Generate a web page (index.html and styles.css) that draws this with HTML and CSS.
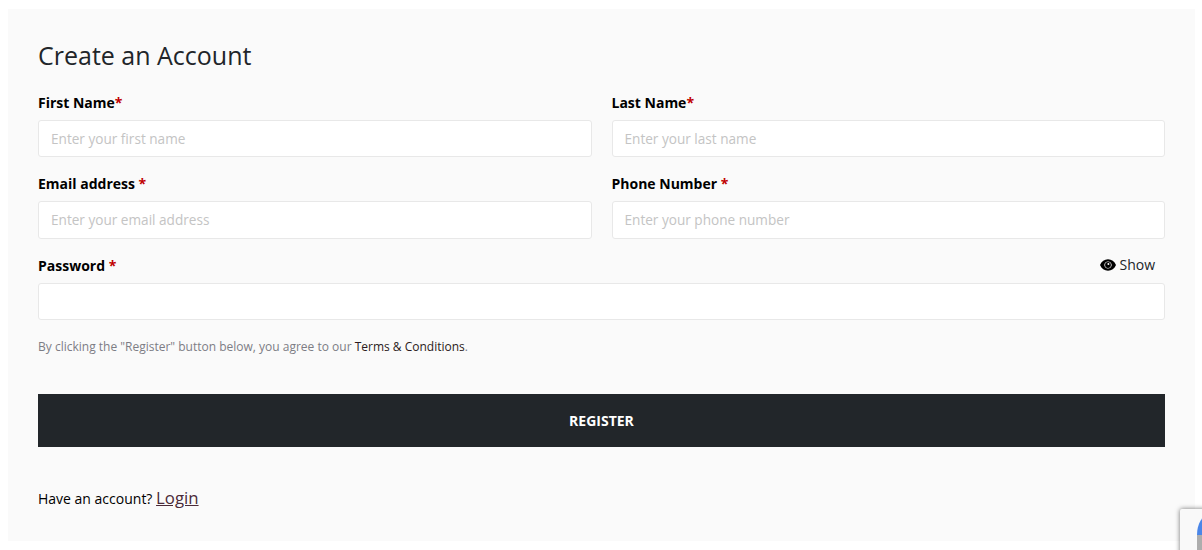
FILE: index.html
```html
<!DOCTYPE html>
<html lang="en">
<head>
<meta charset="utf-8">
<title>Create an Account</title>
<link rel="stylesheet" href="styles.css">
</head>
<body>
<main class="panel">
  <h1 class="title">Create an Account</h1>
  <form class="form">
    <div class="grid">
      <div class="field">
        <label class="label">First Name<span class="req">*</span></label>
        <input class="input" type="text" placeholder="Enter your first name">
      </div>
      <div class="field">
        <label class="label">Last Name<span class="req">*</span></label>
        <input class="input" type="text" placeholder="Enter your last name">
      </div>
      <div class="field">
        <label class="label">Email address <span class="req">*</span></label>
        <input class="input" type="text" placeholder="Enter your email address">
      </div>
      <div class="field">
        <label class="label">Phone Number <span class="req">*</span></label>
        <input class="input" type="text" placeholder="Enter your phone number">
      </div>
    </div>
    <div class="field password">
      <div class="label-row">
        <label class="label">Password <span class="req">*</span></label>
        <span class="show">
          <svg class="eye" viewBox="0 0 16 12" width="16" height="12" aria-hidden="true">
            <path fill-rule="evenodd" d="M8 0.3C4.500 0.3 1.500 2.400 0 6c1.500 3.600 4.500 5.700 8 5.700s6.500-2.100 8-5.700C14.500 2.400 11.500 0.3 8 0.3zM8 2.500c2.100 0 3.700 1.600 3.700 3.500S10.100 9.500 8 9.500 4.300 7.900 4.300 6 5.900 2.500 8 2.500z"/>
            <path fill-rule="evenodd" d="M8 3.100A2.900 2.900 0 1 0 10.900 6 2.900 2.900 0 0 0 8 3.100zM8.400 4A1 1 0 1 1 7.400 5 1 1 0 0 1 8.400 4z"/>
          </svg>
          Show
        </span>
      </div>
      <input class="input" type="password">
    </div>
    <p class="terms">By clicking the "Register" button below, you agree to our <a class="terms-link">Terms &amp; Conditions</a>.</p>
    <button class="submit" type="button">REGISTER</button>
    <p class="login">Have an account? <a class="login-link">Login</a></p>
  </form>
</main>
<div class="recaptcha"><span class="recaptcha-logo"></span></div>
</body>
</html>
```

FILE: styles.css
```css
* { box-sizing: border-box; }
html, body { height: 100%; overflow: hidden; }
body {
  margin: 0;
  padding: 9px 7px 0 8px;
  background: #fff;
  font-family: "Open Sans", "Liberation Sans", sans-serif;
  color: #000;
}
.panel {
  height: 532px;
  padding: 30px 30px 0;
  background: #fafafa;
}
.title {
  margin: 0 0 22px;
  font-size: 25px;
  line-height: 32px;
  font-weight: 400;
  color: #212529;
}
.grid {
  display: grid;
  grid-template-columns: 1fr 1fr;
  column-gap: 20px;
  row-gap: 17px;
}
.field { display: flex; flex-direction: column; }
.label {
  display: block;
  height: 20px;
  margin-bottom: 7px;
  font-size: 14px;
  line-height: 20px;
  font-weight: 700;
}
.req { color: #c00000; }
.input {
  display: block;
  width: 100%;
  height: 37.4px;
  padding: 0 12px 0.6px;
  background: #fff;
  border: 1px solid #e8e8e8;
  border-radius: 3px;
  font-family: inherit;
  font-size: 13.6px;
  color: #495057;
  outline: none;
}
.input::placeholder { color: #c4c4c4; opacity: 1; }
.password { margin-top: 17.2px; }
.label-row {
  display: flex;
  justify-content: space-between;
  align-items: flex-start;
}
.show {
  display: flex;
  align-items: center;
  gap: 3px;
  height: 20px;
  margin-top: -1px;
  margin-right: 10px;
  font-size: 14px;
  line-height: 20px;
  color: #212529;
}
.eye { display: block; fill: #000; }
.terms {
  margin: 17.6px 0 0;
  font-size: 12px;
  line-height: 18px;
  color: #7d7d85;
}
.terms-link { color: #2a1a20; }
.submit {
  display: block;
  width: 100%;
  height: 53px;
  margin-top: 38px;
  padding: 0;
  border: 0;
  background: #22262a;
  color: #fff;
  font-family: inherit;
  font-size: 14px;
  font-weight: 700;
}
.login {
  margin: 39px 0 0;
  font-size: 14px;
  line-height: 24px;
}
.login-link {
  font-size: 16.8px;
  color: #4a2a38;
  text-decoration: underline;
}
.recaptcha {
  position: fixed;
  left: 1180px;
  top: 509px;
  width: 256px;
  height: 60px;
  background: #f9f9f9;
  border-radius: 2px;
  box-shadow: 0 0 5px rgba(0, 0, 0, 0.55);
  overflow: hidden;
}
.recaptcha-logo {
  position: absolute;
  left: 17px;
  top: 6px;
  width: 24px;
  height: 36px;
  background: linear-gradient(#4a86e8 0 20px, #adadad 20px);
  border-radius: 12px 12px 0 0 / 20px 20px 0 0;
}
```
